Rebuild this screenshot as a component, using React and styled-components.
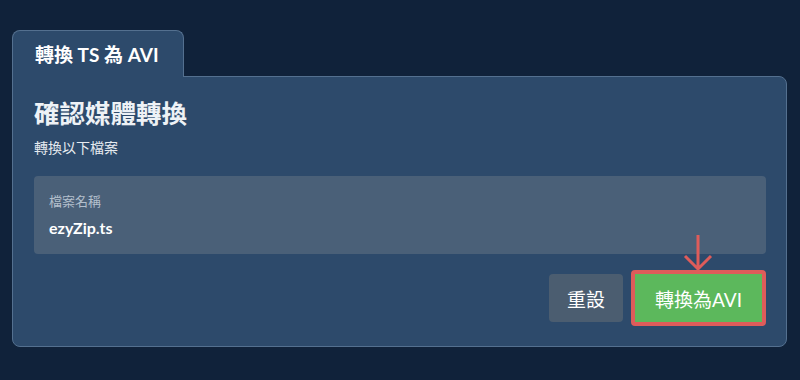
import React from "react";
import styled, { createGlobalStyle } from "styled-components";

const GlobalStyle = createGlobalStyle`
  html, body {
    margin: 0;
    padding: 0;
    background: #10223a;
  }
  body {
    font-family: "Lato", "Noto Sans CJK TC", sans-serif;
    color: #ffffff;
  }
`;

const Page = styled.div`
  display: flex;
  flex-direction: column;
  align-items: flex-start;
  padding: 30px 13px 0 12px;
  height: 380px;
  box-sizing: border-box;
`;

const Tab = styled.div`
  position: relative;
  z-index: 1;
  display: flex;
  align-items: center;
  box-sizing: border-box;
  width: 172px;
  height: 47px;
  margin-bottom: -1px;
  padding: 0 0 2px 22px;
  background: #2d4a6b;
  border: 1px solid #54708f;
  border-bottom: none;
  border-radius: 8px 8px 0 0;
  font-size: 19px;
  font-weight: 700;
`;

const Panel = styled.div`
  align-self: stretch;
  display: flex;
  flex-direction: column;
  box-sizing: border-box;
  height: 271px;
  padding: 17px 20px 20px 21px;
  background: #2d4a6b;
  border: 1px solid #54708f;
  border-radius: 0 8px 8px 8px;
`;

const Heading = styled.h2`
  margin: 0;
  font-family: "Noto Sans CJK TC", sans-serif;
  font-size: 25.5px;
  font-weight: 700;
  line-height: 35px;
  color: #eef2f6;
`;

const Subtitle = styled.p`
  margin: 8px 0 0;
  font-family: "Noto Sans CJK TC", sans-serif;
  font-size: 14px;
  line-height: 20px;
  color: #e6ebf0;
`;

const Field = styled.div`
  margin-top: 19px;
  height: 78px;
  box-sizing: border-box;
  padding: 16px 15px 0;
  background: #4a6078;
  border-radius: 4px;
`;

const FieldLabel = styled.div`
  font-family: "Noto Sans CJK TC", sans-serif;
  font-size: 13px;
  line-height: 18px;
  color: #b3bfcc;
`;

const FieldValue = styled.div`
  margin-top: 8px;
  font-size: 16px;
  font-weight: 700;
  line-height: 20px;
  color: #ffffff;
`;

const Actions = styled.div`
  display: flex;
  justify-content: flex-end;
  align-items: center;
  gap: 8px;
  margin-top: 16px;
`;

const Button = styled.button`
  position: relative;
  display: flex;
  align-items: center;
  justify-content: center;
  box-sizing: border-box;
  height: ${(p) => (p.$highlight ? "56px" : "48px")};
  padding: 0 ${(p) => (p.$highlight ? "20px" : "18px")};
  border: ${(p) => (p.$highlight ? "4px solid #de5c5a" : "none")};
  border-radius: 4px;
  background: ${(p) => (p.$primary ? "#5cb85c" : "#4b5d70")};
  color: #ffffff;
  font-family: "Lato", "Noto Sans CJK TC", sans-serif;
  font-size: 19px;
  cursor: pointer;
`;

const Pointer = styled.svg`
  position: absolute;
  left: 50%;
  bottom: calc(100% + 2px);
  transform: translateX(-50%);
`;

const DownArrow = () => (
  <Pointer width="32" height="38" viewBox="0 0 32 38">
    <path
      d="M16 1 V35 M3 22 L16 35 L29 22"
      fill="none"
      stroke="#de5c5a"
      strokeWidth="3"
    />
  </Pointer>
);

const App = () => {
  return (
    <>
      <GlobalStyle />
      <Page>
        <Tab>轉換 TS 為 AVI</Tab>
        <Panel>
          <Heading>確認媒體轉換</Heading>
          <Subtitle>轉換以下檔案</Subtitle>
          <Field>
            <FieldLabel>檔案名稱</FieldLabel>
            <FieldValue>ezyZip.ts</FieldValue>
          </Field>
          <Actions>
            <Button>重設</Button>
            <Button $primary $highlight>
              <DownArrow />
              轉換為AVI
            </Button>
          </Actions>
        </Panel>
      </Page>
    </>
  );
};

export default App;
